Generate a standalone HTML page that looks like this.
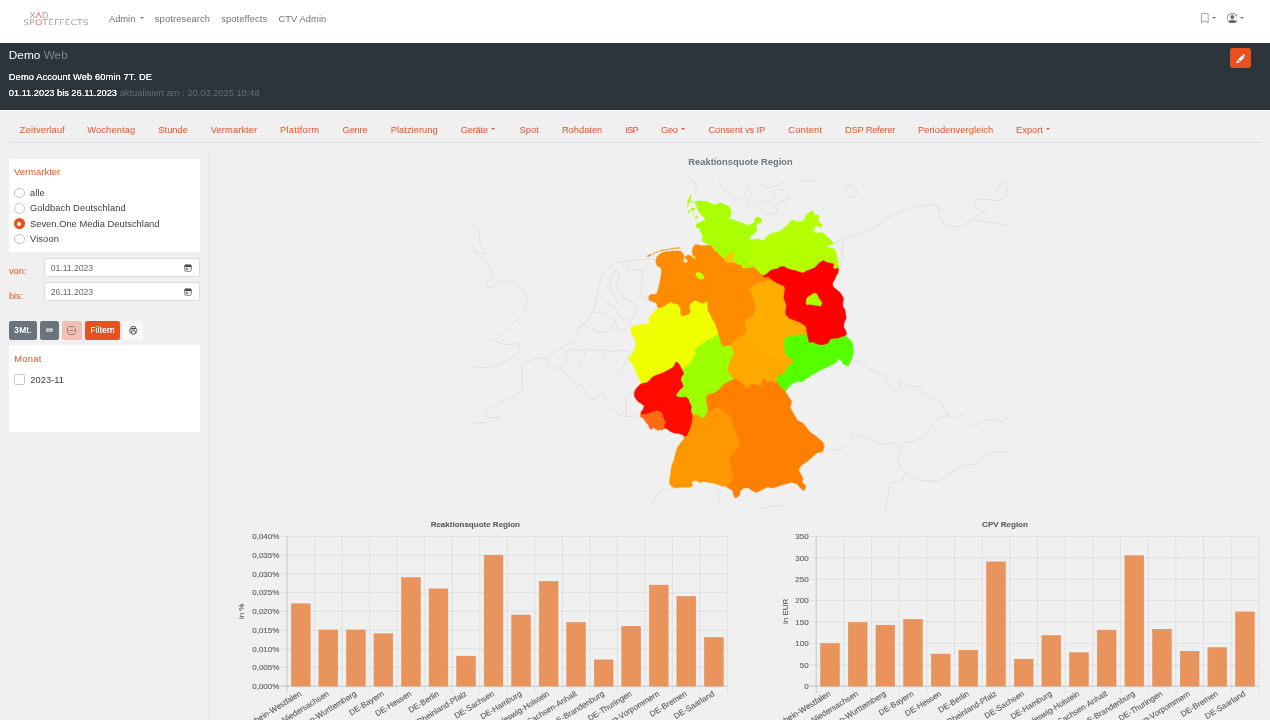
<!DOCTYPE html>
<html lang="de"><head><meta charset="utf-8"><title>Demo Web</title>
<style>
html,body{margin:0;padding:0}
body{width:1270px;height:720px;overflow:hidden;position:relative;background:#f0f0f0;font-family:"Liberation Sans", sans-serif}
#app{position:absolute;left:0;top:0;width:1270px;height:720px;will-change:transform}
.abs,.t,.card,.inp,.caret,.nav,.hdr{position:absolute}
.t{white-space:pre}
.nav{left:0;top:0;width:1270px;height:43px;background:#fff}
.hdr{left:0;top:43.2px;width:1270px;height:66.4px;background:#2d353c;border-bottom:.8px solid #fafafa}
.card{background:#fff}
.inp{background:#fff;border:.7px solid #d9dadc;border-radius:2.2px;box-sizing:border-box}
.caret{width:0;height:0;border-left:2.8px solid transparent;border-right:2.8px solid transparent;border-top:2.9px solid #777}
</style></head>
<body>
<div id="app">
<div class="nav"></div>
<svg class="abs" style="left:18px;top:6px" width="80" height="26" viewBox="18 6 80 26">
<g font-family="'DejaVu Sans', 'Liberation Sans', sans-serif" font-weight="200" fill="#939393" stroke="#939393" stroke-width=".18">
<text x="29.4" y="18.2" font-size="7.4" textLength="19.3" lengthAdjust="spacingAndGlyphs">X<tspan fill="#e8614a" stroke="#e8614a">&#923;</tspan>D</text>
<text x="23.3" y="25.4" font-size="7.4" textLength="65.5" lengthAdjust="spacingAndGlyphs">SP<tspan fill="#e8614a" stroke="#e8614a">O</tspan>TEFFECTS</text>
</g></svg>
<i class="caret" style="left:139.6px;top:17.3px;border-top-color:#737373"></i>
<svg class="abs" style="left:1199.6px;top:13px" width="9.6" height="9.9" viewBox="0 0 16 16" fill="#6b6b6b"><path d="M2 2a2 2 0 0 1 2-2h8a2 2 0 0 1 2 2v13.5a.5.5 0 0 1-.777.416L8 13.101l-5.223 2.815A.5.5 0 0 1 2 15.5zm2-1a1 1 0 0 0-1 1v12.566l4.723-2.482a.5.5 0 0 1 .554 0L13 14.566V2a1 1 0 0 0-1-1z"/></svg>
<i class="caret" style="left:1211.6px;top:17.2px;border-top-color:#737373"></i>
<svg class="abs" style="left:1226.6px;top:12.6px" width="10.67" height="10.67" viewBox="0 0 16 16" fill="#6b6b6b"><path d="M11 6a3 3 0 1 1-6 0 3 3 0 0 1 6 0"/><path fill-rule="evenodd" d="M0 8a8 8 0 1 1 16 0A8 8 0 0 1 0 8m8-7a7 7 0 0 0-5.468 11.37C3.242 11.226 4.805 10 8 10s4.757 1.225 5.468 2.37A7 7 0 0 0 8 1"/></svg>
<i class="caret" style="left:1239.8px;top:17.2px;border-top-color:#737373"></i>
<div class="hdr"></div>
<div class="abs" style="left:1230px;top:48.1px;width:20.8px;height:20.3px;background:#e8501f;border-radius:2.7px"></div>
<svg class="abs" style="left:1235.6px;top:53.6px" width="9.6" height="9.6" viewBox="0 0 16 16" fill="#fff"><path d="M12.854.146a.5.5 0 0 0-.707 0L10.5 1.793 14.207 5.5l1.647-1.646a.5.5 0 0 0 0-.708zm.646 6.061L9.793 2.5 3.293 9H3.5a.5.5 0 0 1 .5.5v.5h.5a.5.5 0 0 1 .5.5v.5h.5a.5.5 0 0 1 .5.5v.5h.5a.5.5 0 0 1 .5.5v.207zm-7.468 7.468A.5.5 0 0 1 6 13.5V13h-.5a.5.5 0 0 1-.5-.5V12h-.5a.5.5 0 0 1-.5-.5V11h-.5a.5.5 0 0 1-.5-.5V10h-.5a.5.5 0 0 1-.175-.032l-.179.178a.5.5 0 0 0-.11.168l-2 5a.5.5 0 0 0 .65.65l5-2a.5.5 0 0 0 .168-.11z"/></svg>
<i class="caret" style="left:491.2px;top:128.4px;border-top-color:#e2542e"></i>
<i class="caret" style="left:680.6px;top:128.4px;border-top-color:#e2542e"></i>
<i class="caret" style="left:1045.7px;top:128.4px;border-top-color:#e2542e"></i>
<div class="abs" style="left:8.7px;top:141.8px;width:1252.6px;height:.7px;background:#dcdfe3"></div>
<div class="abs" style="left:209.3px;top:153px;width:.7px;height:567px;background:#e2e2e2"></div>
<div class="card" style="left:8.7px;top:159px;width:191px;height:93px"></div>
<div class="abs" style="left:13.9px;top:187.75px;width:10.7px;height:10.7px;border-radius:50%;background:#fff;border:.7px solid #c4c8cc;box-sizing:border-box"></div>
<div class="abs" style="left:13.9px;top:203.05px;width:10.7px;height:10.7px;border-radius:50%;background:#fff;border:.7px solid #c4c8cc;box-sizing:border-box"></div>
<div class="abs" style="left:13.9px;top:218.35px;width:10.7px;height:10.7px;border-radius:50%;background:#e8501f;box-sizing:border-box"></div><div class="abs" style="left:17.15px;top:221.60px;width:4.2px;height:4.2px;border-radius:50%;background:#fff"></div>
<div class="abs" style="left:13.9px;top:233.65px;width:10.7px;height:10.7px;border-radius:50%;background:#fff;border:.7px solid #c4c8cc;box-sizing:border-box"></div>
<div class="inp" style="left:43.9px;top:258.1px;width:156.1px;height:18.9px"></div>
<svg class="abs" style="left:184.2px;top:263.55px" width="8" height="8" viewBox="0 0 16 16"><rect x="1.3" y="1.6" width="13.4" height="13" rx="2.4" fill="#fff" stroke="#5a5a5a" stroke-width="1.4"/><path d="M1.3 6.2V4a2.4 2.4 0 0 1 2.4-2.4h8.6A2.4 2.4 0 0 1 14.7 4v2.2z" fill="#4c4c4c"/><rect x="3.4" y="8.4" width="4.6" height="4" fill="#8a8a8a"/><path d="M1.6 8h12.8" stroke="#777" stroke-width=".9"/></svg>
<div class="inp" style="left:43.9px;top:282.4px;width:156.1px;height:18.9px"></div>
<svg class="abs" style="left:184.2px;top:287.85px" width="8" height="8" viewBox="0 0 16 16"><rect x="1.3" y="1.6" width="13.4" height="13" rx="2.4" fill="#fff" stroke="#5a5a5a" stroke-width="1.4"/><path d="M1.3 6.2V4a2.4 2.4 0 0 1 2.4-2.4h8.6A2.4 2.4 0 0 1 14.7 4v2.2z" fill="#4c4c4c"/><rect x="3.4" y="8.4" width="4.6" height="4" fill="#8a8a8a"/><path d="M1.6 8h12.8" stroke="#777" stroke-width=".9"/></svg>
<div class="abs" style="left:8.9px;top:320.8px;width:28.2px;height:18.8px;background:#6b747c;border-radius:2.2px"></div>
<div class="abs" style="left:40.1px;top:320.8px;width:18.5px;height:18.8px;background:#6b747c;border-radius:2.2px"></div>
<div class="abs" style="left:61.7px;top:320.8px;width:20.2px;height:18.8px;background:#f0c0b2;border-radius:2.2px"></div>
<svg class="abs" style="left:67.3px;top:325.7px" width="9" height="9" viewBox="0 0 16 16" fill="#3d3d3d"><path d="M8 15A7 7 0 1 1 8 1a7 7 0 0 1 0 14m0 1A8 8 0 1 0 8 0a8 8 0 0 0 0 16"/><path d="M4 8a.5.5 0 0 1 .5-.5h7a.5.5 0 0 1 0 1h-7A.5.5 0 0 1 4 8"/></svg>
<div class="abs" style="left:85px;top:320.8px;width:35.1px;height:18.8px;background:#e8501f;border-radius:2.2px"></div>
<div class="abs" style="left:123.3px;top:320.8px;width:19.5px;height:18.8px;background:#f8f9fa;border-radius:2.2px"></div>
<svg class="abs" style="left:128.8px;top:326px" width="8.6" height="8.8" viewBox="0 0 16 16" fill="none" stroke="#333" stroke-width="1.5"><rect x="4" y="1" width="8" height="4" rx="1"/><rect x="1.5" y="4.5" width="13" height="8" rx="2.5"/><rect x="4.5" y="8.5" width="7" height="6.5" rx="1" fill="#f8f9fa"/></svg>
<div class="card" style="left:8.7px;top:345px;width:191px;height:87px"></div>
<div class="abs" style="left:14.2px;top:374.3px;width:10.4px;height:10.4px;border-radius:2.2px;background:#fff;border:.7px solid #c4c8cc;box-sizing:border-box"></div>
<svg class="abs" style="left:440px;top:170px" width="620" height="350" viewBox="440 170 620 350">
<g fill="none" stroke="#d9d9d9" stroke-width=".65" stroke-linejoin="round"><polyline points="470.7,222.0 475.4,229.1 480.2,233.8 479.0,240.9 483.7,250.3 486.1,253.9 480.2,252.7 473.1,250.3 475.4,253.9 482.5,258.6 488.4,264.5 492.0,272.8 490.8,278.7 486.1,283.4 487.2,286.9 493.2,286.9 497.9,282.2 505.0,280.6 513.2,282.2 520.3,286.9 525.0,292.8 526.9,301.1 525.0,309.4 521.5,316.5 515.6,321.2 510.9,325.9 506.1,330.6 500.2,335.4 495.5,340.1"/><polyline points="653.8,259.3 645.5,259.3 636.1,260.2 626.6,261.0 617.2,262.6 610.1,265.7 605.4,270.4 601.8,276.3 599.5,284.6 597.8,292.8 595.9,301.1 593.6,309.4 590.0,316.5 585.3,322.4 579.4,328.3 573.5,334.2 568.8,340.1"/><polyline points="616.0,269.2 619.5,277.5 616.0,285.8 621.9,292.8 624.3,298.8 617.2,302.3 613.6,295.2 608.9,288.1 611.3,278.7 616.0,269.2"/><polyline points="626.6,261.0 629.0,269.2 640.8,270.4 647.9,266.9"/><polyline points="640.8,270.4 643.2,281.0 639.6,290.5 645.5,299.9 648.4,299.5"/><polyline points="624.3,298.8 633.7,302.3 636.1,311.7 631.4,321.2 629.0,325.9"/><polyline points="605.4,302.3 614.8,307.0 619.5,316.5 629.0,321.2"/><polyline points="593.6,311.7 605.4,314.1 614.8,321.2 610.1,330.6 600.6,333.0 591.2,328.3 581.7,323.6 577.0,335.4"/><polyline points="614.8,321.2 619.5,330.6 629.0,327.1"/><polyline points="690.9,179.9 695.1,181.8 696.3,187.7 695.1,193.6"/><polyline points="718.8,180.6 722.3,188.9 728.2,193.6 734.1,196.0 738.8,200.7"/><polyline points="834.5,243.2 843.9,238.5 853.4,235.0 865.2,231.4 874.7,227.9 881.7,223.2 888.8,217.2 898.3,212.5 910.1,207.8 921.9,205.4 933.7,204.3 938.4,207.8 939.6,216.1 943.2,223.2 950.3,226.7 959.7,226.7 966.8,223.2 972.7,218.4 978.6,214.9 984.5,211.3 976.2,209.0 973.9,203.1 976.2,199.5 988.1,199.5 999.9,200.7 1005.8,197.2 1007.0,188.9 1009.3,183.0 1002.2,180.6 998.7,187.7 992.8,194.8"/><polyline points="972.7,219.6 985.7,222.0 999.9,223.9 1010.5,225.5"/><polyline points="936.1,205.4 942.0,210.2 946.7,213.7"/><polyline points="834.5,243.2 839.2,248.0 842.8,252.7 841.6,261.0 840.4,266.9"/><polyline points="843.9,238.5 841.6,250.3 843.9,259.8"/><polyline points="845.1,187.7 851.0,184.6 856.9,190.1 855.8,196.0 849.9,197.2 845.1,192.4 845.1,187.7"/><polyline points="740.0,200.7 744.7,196.0 748.3,186.5 750.6,181.8"/><polyline points="745.9,207.8 749.4,198.3 751.8,191.3"/><polyline points="754.2,205.4 761.3,200.7 768.3,203.1 775.4,198.3 773.1,191.3 780.2,188.9 787.2,192.4 790.8,198.3 782.5,200.7 775.4,205.4 777.8,212.5 768.3,213.7 761.3,210.2 754.2,205.4"/><polyline points="758.9,180.6 763.6,186.5 770.7,187.7 780.2,184.2 788.4,180.6"/><polyline points="799.1,179.9 808.5,181.8 818.0,179.4"/><polyline points="853.4,360.1 860.5,362.4 867.6,368.3 877.0,371.9 884.1,375.4 887.6,381.3 891.2,387.2 895.9,392.0 900.6,387.2 898.3,381.3 905.4,383.7 914.8,387.2 919.5,386.1 923.1,393.2 929.0,396.7 936.1,399.1 942.0,402.6 943.2,408.5 946.7,412.1 947.9,415.6 940.8,416.8 936.1,420.3 931.4,426.2 926.6,433.3 919.5,438.0 912.5,441.6 905.4,442.8 901.8,446.3"/><polyline points="947.9,415.6 953.8,419.1 959.7,414.4 964.4,415.6 970.3,422.7 973.9,427.4 978.6,423.9 985.7,420.3 994.0,419.1 1001.0,421.5 1005.8,418.0 1010.5,419.1"/><polyline points="823.9,446.3 829.8,449.9 839.2,449.9 846.3,446.3 851.0,441.6 853.4,434.5 860.5,435.7 867.6,439.2 877.0,442.8 886.5,443.9 893.6,442.8 900.6,446.3 898.8,453.4 897.8,460.5 900.6,467.6 904.9,472.3"/><polyline points="904.9,472.3 912.5,478.2 921.9,480.6 933.7,481.3 943.2,479.4 947.9,473.5 957.3,468.8 966.8,464.0 973.9,465.2 981.0,460.5 988.1,453.4 995.1,451.0 1002.2,452.2 1010.5,451.0"/><polyline points="904.9,472.3 903.0,479.4 895.9,481.7 890.0,482.9 888.8,491.2 887.6,500.6 885.3,510.1"/><polyline points="758.9,508.9 770.7,506.5 782.5,505.4"/><polyline points="493.2,340.0 501.4,343.5 510.9,344.7 518.0,343.5 519.1,349.4 515.6,355.4 508.5,360.1 499.1,363.6 489.6,368.3 480.2,367.2 470.7,366.0"/><polyline points="581.7,340.0 574.7,342.4 567.6,344.7 560.5,348.3 553.4,353.0 546.3,357.7 534.5,358.9 526.2,362.4 522.7,367.2 521.5,375.4 522.7,383.7 521.5,390.8 515.6,395.5 508.5,399.1 500.2,402.6 493.2,406.1 487.2,410.9 484.9,415.6 489.6,418.0 496.7,416.8 501.4,415.6 497.9,419.1 490.8,421.5 482.5,422.7 475.4,423.9 471.9,421.5"/><polyline points="546.3,357.7 548.7,363.6 553.4,368.3 560.5,367.9 565.2,373.1 568.8,379.0 574.7,382.5 581.7,386.1 585.3,390.8 586.5,396.7 592.4,399.1 598.3,396.7 601.8,390.8 604.2,396.7 605.4,402.6 610.1,407.3 616.0,410.9 619.5,415.6 626.6,416.8 633.7,415.6 639.6,416.8"/><polyline points="560.5,348.3 567.6,351.8 572.3,349.4 579.4,350.6 586.5,348.3 593.6,350.6 603.0,349.4 610.1,351.8 619.5,350.6 629.0,351.8"/><polyline points="567.6,351.8 565.2,358.9 568.8,363.6 560.5,367.9"/><polyline points="586.5,348.3 584.1,356.5 579.4,361.3 581.7,366.0"/><polyline points="603.0,349.4 605.4,356.5 600.6,361.3"/><polyline points="626.6,416.8 625.4,408.5 626.6,400.2 630.2,394.3 633.7,390.8 634.9,396.7"/><polyline points="629.0,351.8 626.6,360.1 623.1,366.0 620.7,374.3"/><polyline points="669.2,488.8 662.1,491.2 657.3,493.6 653.8,500.6 650.3,506.5 645.5,510.1"/><polyline points="715.2,487.6 721.1,491.2 717.6,497.1 719.9,503.0 723.5,506.5"/></g>
<polygon points="703.8,390.5 711.2,388.6 717.8,386.7 720.6,383.0 725.3,381.1 730.0,377.4 733.7,373.6 738.4,375.5 743.1,377.4 746.9,379.2 751.5,379.2 758.1,379.2 761.8,377.4 763.7,375.5 766.5,377.4 772.1,377.4 776.8,377.4 779.6,379.2 783.4,385.8 785.3,391.4 788.1,396.1 791.8,401.7 790.0,407.4 793.7,413.9 797.5,420.5 803.1,423.3 806.8,428.0 810.6,432.7 815.2,435.5 818.1,438.3 822.8,442.0 824.1,446.7 822.8,451.4 816.2,453.3 812.4,457.0 806.8,461.7 801.2,465.4 798.4,470.1 801.2,474.8 803.1,479.5 802.1,482.3 805.9,486.1 804.0,490.8 800.3,487.9 797.5,484.2 791.8,482.3 784.3,484.2 778.7,486.1 773.1,487.9 767.5,487.0 761.8,489.8 756.2,492.6 752.5,490.8 748.7,487.9 744.0,487.9 740.3,490.8 739.4,495.4 735.6,498.2 733.7,495.4 732.8,490.8 728.1,487.9 724.4,485.1 722.5,480.4 722.5,465.4 724.4,452.3 728.1,443.0 728.1,431.7 724.4,420.5 716.9,413.0 707.5,414.9 703.8,405.5" fill="#ff8000" stroke="#ff8000" stroke-width=".5" stroke-linejoin="round"/>
<polygon points="655.8,260.0 657.1,256.7 660.0,253.7 664.2,252.1 670.0,251.2 676.7,250.8 680.8,251.2 682.7,252.9 684.2,256.8 683.2,260.0 683.5,261.8 685.0,262.9 687.1,262.5 687.9,260.4 686.7,259.2 685.3,258.7 685.0,256.8 687.1,255.4 689.2,255.0 691.7,256.7 693.3,257.9 694.3,256.8 692.5,254.2 692.1,250.8 693.3,246.7 695.8,244.2 698.3,245.0 701.7,245.8 705.8,245.4 710.0,245.0 712.5,246.2 714.2,249.2 714.6,251.1 720.6,250.0 728.1,253.7 737.5,259.4 748.7,263.1 759.9,270.6 767.4,276.2 773.1,276.6 780.5,284.1 771.2,289.4 759.9,289.4 756.2,310.0 752.4,328.7 748.7,339.9 728.1,345.6 722.5,349.3 716.8,341.8 711.2,336.2 696.2,328.7 668.1,325.0 658.7,309.0 657.8,307.1 655.9,302.5 649.4,300.6 648.4,297.8 650.3,294.6 656.9,294.0 657.1,293.3 658.3,288.3 659.6,284.2 660.4,279.2 661.2,274.2 661.7,270.0 660.8,267.5 657.5,266.3 656.2,263.3" fill="#ff8c00" stroke="#ff8c00" stroke-width=".5" stroke-linejoin="round"/>
<polygon points="708.3,412.9 711.5,410.5 715.5,408.1 719.4,407.4 722.6,409.7 725.0,413.7 729.0,415.3 731.4,419.3 732.2,424.9 734.6,430.5 737.0,436.1 739.4,440.9 739.4,445.7 737.0,448.9 733.8,452.9 729.8,456.0 729.0,460.8 730.6,466.4 732.2,472.0 732.2,477.6 732.2,480.8 728.2,484.8 723.4,486.4 718.6,484.8 713.9,483.2 709.1,482.4 704.3,481.6 699.5,482.4 697.1,480.8 693.1,480.8 691.5,483.2 693.1,485.6 689.9,487.2 685.1,487.2 680.3,487.2 675.5,488.0 671.5,486.4 669.2,482.4 670.0,477.6 670.8,472.0 671.5,466.4 674.0,460.0 675.5,453.6 677.1,448.1 680.3,443.3 684.3,438.5 681.9,432.9 686.7,416.9 694.7,408.9 704.3,408.9" fill="#ff9800" stroke="#ff9800" stroke-width=".5" stroke-linejoin="round"/>
<polygon points="656.7,309.1 661.5,307.8 666.3,305.4 670.3,302.2 673.5,303.8 677.5,304.6 680.3,308.6 679.9,312.6 681.5,316.6 685.5,315.8 689.4,314.2 691.0,311.0 689.4,307.0 691.0,303.8 695.0,300.6 698.2,302.2 703.0,303.8 707.5,301.4 707.0,306.2 707.8,311.0 710.2,315.0 711.8,318.9 714.2,322.1 715.8,326.9 717.4,330.9 718.2,334.9 715.8,342.9 709.4,355.7 696.6,371.6 683.9,384.4 659.9,390.8 644.0,387.6 640.8,383.6 640.0,380.4 637.6,376.4 636.0,371.6 633.6,367.6 632.0,363.6 628.8,359.7 629.6,356.5 633.6,351.7 635.2,347.7 636.0,342.9 634.4,338.1 632.0,334.1 630.4,329.3 632.8,326.1 637.6,325.3 644.0,324.5 649.5,322.9 648.7,318.9 651.1,315.0 654.3,311.8" fill="#f0ff00" stroke="#f0ff00" stroke-width=".5" stroke-linejoin="round"/>
<polygon points="683.9,368.7 686.0,366.6 689.7,364.4 691.9,361.4 693.3,357.8 695.5,354.1 694.8,350.5 697.0,346.9 700.6,345.4 704.3,343.2 707.2,340.3 711.5,338.9 715.2,335.9 717.4,334.5 719.6,338.1 720.3,342.5 721.8,345.4 724.7,346.9 727.6,345.4 734.1,346.9 737.1,361.4 734.1,378.9 729.8,380.4 726.1,382.6 722.5,384.8 720.3,387.7 717.4,390.6 713.7,392.8 710.1,393.5 706.4,395.0 705.7,399.3 706.4,403.7 707.6,407.4 707.2,411.7 705.0,415.4 702.8,418.3 699.9,416.1 697.0,413.9 694.0,414.6 691.9,412.5 686.0,412.5 684.6,400.8 672.9,397.9 674.4,383.3 678.8,371.6" fill="#9dff00" stroke="#9dff00" stroke-width=".5" stroke-linejoin="round"/>
<polygon points="640.1,384.5 643.0,383.3 646.6,382.7 649.5,380.4 651.9,377.4 655.4,375.6 659.6,373.9 663.1,372.7 666.6,370.9 670.2,369.1 673.7,366.8 675.9,362.1 677.9,362.6 680.2,366.2 682.6,370.9 683.8,373.9 681.4,376.8 680.8,380.4 682.6,383.9 683.2,386.9 680.2,389.2 677.9,392.2 676.1,394.5 677.3,396.9 681.4,397.5 686.1,396.9 688.5,399.2 689.7,402.8 691.5,406.3 690.9,409.9 691.5,413.4 692.3,415.6 692.0,419.3 691.5,422.9 690.3,426.4 689.1,430.6 687.3,434.7 685.5,436.4 682.6,434.7 679.0,433.5 675.5,433.3 672.0,432.3 669.0,430.6 667.2,428.8 664.9,428.2 659.0,426.4 649.5,424.1 642.4,415.8 640.7,414.4 641.3,411.6 643.6,408.7 644.2,405.8 641.9,404.0 638.9,402.2 636.5,399.8 634.8,396.9 634.2,393.4 635.4,389.8 637.1,387.4" fill="#ff0a00" stroke="#ff0a00" stroke-width=".5" stroke-linejoin="round"/>
<polygon points="640.7,414.4 643.6,414.6 647.2,414.0 650.1,412.8 653.1,411.6 656.6,410.8 660.2,411.6 662.5,414.0 663.1,417.0 664.3,419.9 665.5,422.9 663.9,425.8 664.6,428.5 661.9,430.0 659.6,429.4 657.8,430.6 655.4,428.8 653.1,427.6 651.3,429.4 649.5,428.2 648.4,425.2 646.6,422.9 644.8,420.5 643.0,418.1 640.7,417.0 640.1,415.6" fill="#ff6a14" stroke="#ff6a14" stroke-width=".5" stroke-linejoin="round"/>
<polygon points="727.1,345.4 731.8,344.2 736.5,338.9 740.1,336.5 745.4,334.7 750.7,332.4 759.0,339.4 767.2,346.5 776.7,353.6 786.1,355.4 795.6,358.4 795.6,365.4 788.5,377.2 781.4,383.1 777.9,382.0 774.3,382.0 770.8,380.8 767.2,382.0 765.5,379.0 763.1,378.4 761.3,382.0 760.8,385.5 758.4,384.9 754.8,383.7 750.7,384.3 748.4,386.1 747.8,388.5 745.4,387.9 744.2,384.9 741.3,382.0 738.3,380.2 734.8,377.2 733.0,377.8 731.2,377.2 731.2,376.6 729.5,373.1 727.7,370.2 728.9,365.4 730.0,361.3 732.4,357.2 734.2,353.0 731.2,346.5" fill="#ffa900" stroke="#ffa900" stroke-width=".5" stroke-linejoin="round"/>
<polygon points="767.1,280.6 764.2,282.1 757.4,284.0 751.8,286.8 749.5,289.4 751.8,294.8 754.1,300.1 754.9,305.5 755.6,310.8 753.3,316.1 748.0,319.2 744.9,322.2 745.7,327.6 746.5,332.2 744.9,336.0 749.5,336.4 752.6,339.8 754.9,342.9 759.4,344.4 762.5,348.2 763.2,352.0 767.1,354.3 771.6,355.8 775.5,358.1 780.0,358.9 788.4,357.4 793.0,356.6 790.0,341.3 808.3,336.8 811.3,330.6 802.2,318.4 791.5,310.8 788.4,287.9 780.8,282.6 775.0,281.5" fill="#ffad00" stroke="#ffad00" stroke-width=".5" stroke-linejoin="round"/>
<polygon points="806.9,334.2 803.4,334.8 798.6,334.8 793.9,335.9 789.2,336.5 785.0,338.3 784.5,341.9 784.5,346.0 785.0,350.7 785.6,354.2 786.8,356.0 790.4,357.8 793.3,360.2 793.9,361.9 790.9,364.3 788.0,366.6 786.2,369.0 785.6,372.6 782.1,374.3 778.5,376.1 776.8,377.9 777.4,381.4 779.1,385.0 781.5,387.3 783.9,389.1 786.2,390.9 788.0,387.9 790.4,385.6 792.7,383.2 796.3,382.0 799.8,381.4 803.4,381.4 805.1,379.1 808.7,377.3 811.6,374.9 815.8,373.1 818.7,370.8 822.8,369.0 827.0,367.2 830.5,365.5 834.0,363.7 837.0,361.9 837.6,359.6 835.2,358.4 838.8,359.0 841.7,360.8 842.9,363.7 845.9,365.5 848.2,366.1 850.0,362.5 851.8,359.0 853.0,354.8 853.5,350.7 852.7,346.6 852.4,343.0 850.6,340.1 847.6,337.7 846.8,337.5 845.9,334.2 828.1,336.5 819.9,340.1 810.4,337.7" fill="#55ff00" stroke="#55ff00" stroke-width=".5" stroke-linejoin="round"/>
<polygon points="750.0,240.0 753.8,239.4 758.1,238.8 761.9,240.6 764.4,240.0 765.6,237.5 768.8,235.0 771.9,233.1 775.6,232.8 779.4,231.2 782.5,229.4 785.0,226.9 788.1,224.4 791.2,220.0 794.4,220.6 798.1,221.9 801.2,221.2 804.4,220.0 805.6,215.6 808.8,213.1 811.9,210.6 813.8,211.9 814.0,215.0 817.5,215.0 819.4,216.2 818.1,220.0 819.4,222.5 821.9,224.4 822.2,226.9 820.0,227.5 817.5,225.6 815.0,226.9 813.1,229.4 814.4,232.5 818.1,233.1 821.9,232.2 825.0,234.4 828.1,237.5 831.2,240.6 833.5,243.8 830.0,244.8 826.9,245.6 827.5,247.5 831.2,248.1 835.0,249.4 836.2,252.5 836.9,256.2 837.5,260.0 838.1,263.8 838.8,267.5 837.5,275.0 800.0,280.0 775.0,280.0 768.8,277.2 762.5,275.0 760.0,272.5 756.9,269.4 754.4,266.9 751.9,266.2 750.0,267.5 742.5,268.1 742.5,241.2" fill="#b4ff00" stroke="#b4ff00" stroke-width=".5" stroke-linejoin="round"/>
<polygon points="767.8,272.9 769.9,270.8 773.3,269.4 777.5,268.8 780.3,266.7 784.4,266.7 787.9,268.8 792.1,270.1 796.2,270.8 799.7,272.2 803.2,272.9 806.7,270.8 810.8,269.4 814.3,268.1 817.1,265.3 819.9,262.5 823.3,260.4 826.8,262.5 831.0,263.2 833.8,263.9 833.1,267.4 834.4,269.4 837.2,268.1 838.6,268.8 837.9,272.9 835.8,276.4 834.4,279.9 832.4,283.3 833.1,286.8 836.5,289.6 840.0,292.4 842.1,295.8 843.5,298.6 842.8,302.8 842.8,306.2 844.9,309.7 845.6,313.9 846.2,318.1 844.2,322.2 843.5,327.1 845.6,330.6 846.7,334.0 844.9,335.8 841.4,336.8 837.2,338.2 833.1,338.2 829.6,339.6 828.2,343.1 824.0,344.4 819.9,344.7 815.7,343.3 812.2,341.7 809.4,342.8 808.3,338.9 807.4,334.7 806.7,330.6 806.0,326.4 803.2,324.3 799.7,322.2 796.2,320.8 792.1,319.4 788.6,317.4 785.8,314.6 785.8,310.4 786.5,305.6 785.1,301.4 783.8,297.9 784.4,293.8 785.1,289.6 784.4,286.1 781.0,284.7 777.5,283.3 774.0,281.2 770.6,278.5 767.8,276.4 765.6,277.4 762.5,276.0 765.0,275.1" fill="#ff0000" stroke="#ff0000" stroke-width=".5" stroke-linejoin="round"/>
<polygon points="806.0,303.5 806.7,298.6 808.8,296.5 811.5,295.1 814.3,293.1 817.1,294.4 818.5,297.9 820.6,300.7 821.9,303.5 820.6,306.2 817.8,305.6 813.6,304.9 809.4,304.2 807.4,304.9" fill="#aaff00" stroke="#aaff00" stroke-width=".5" stroke-linejoin="round"/>
<polygon points="695.0,201.8 700.0,200.8 707.0,201.5 712.0,204.0 714.5,205.0 720.0,202.8 724.0,204.5 728.5,206.0 730.5,209.5 731.2,214.0 729.0,218.5 732.0,219.5 736.0,221.0 742.0,223.0 748.0,225.5 752.0,223.5 755.0,222.2 754.5,219.0 757.5,216.8 761.0,218.5 762.0,222.0 758.5,223.0 756.5,225.0 757.0,230.0 754.0,234.0 750.0,236.0 749.5,238.5 750.7,239.4 752.2,242.4 749.8,245.3 748.8,248.2 750.7,251.1 752.2,254.0 751.2,257.4 748.8,259.8 746.4,262.3 744.9,264.2 741.5,265.2 738.6,264.2 735.7,262.8 732.8,262.3 729.8,261.8 728.4,262.8 726.4,261.8 725.0,260.3 724.0,258.4 721.6,256.4 719.2,254.0 716.7,251.6 714.3,249.2 712.8,246.7 710.9,245.1 707.5,243.8 704.6,242.8 702.6,240.9 701.7,238.5 703.1,236.5 701.7,234.1 700.2,231.7 700.7,229.2 698.3,228.3 695.8,226.8 696.3,223.9 699.2,222.4 702.0,221.5 705.5,220.0 705.0,218.5 702.0,215.5 700.0,213.0 697.5,209.0 696.5,205.0 695.0,202.2" fill="#aaff00" stroke="#aaff00" stroke-width=".5" stroke-linejoin="round"/>
<polygon points="724.0,257.9 726.4,256.0 729.8,253.5 732.8,252.1 733.7,254.0 733.2,256.9 731.8,258.9 733.2,260.3 735.7,262.3 735.2,263.2 732.8,262.3 729.8,261.8 728.4,262.8 726.4,261.8 725.0,260.3" fill="#ffc400" stroke="#ffc400" stroke-width=".5" stroke-linejoin="round"/>
<polygon points="695.8,273.0 699.2,272.5 702.1,273.9 704.1,275.9 703.6,278.8 700.7,279.3 698.3,278.3 696.3,275.9" fill="#ccff00" stroke="#ccff00" stroke-width=".5" stroke-linejoin="round"/>

<g fill="#aaff00">
<polygon points="691,194.2 689.2,197 687.4,202.5 687.2,207.5 688.2,207 688.8,203.5 690,200.8 692.5,202.6 695,202.5 695,201.8 692.5,201.6 690.5,199.5 691.2,196.5 691.6,194.5"/>
<ellipse cx="692.5" cy="209.3" rx="2.6" ry="1.4" transform="rotate(-10 692.5 209.3)"/>
<ellipse cx="688.8" cy="211.7" rx=".8" ry="1.8" transform="rotate(-15 688.8 211.7)"/>
<ellipse cx="696.5" cy="217.2" rx="1.5" ry="1.2"/>
<ellipse cx="693.7" cy="214.6" rx="1" ry=".5"/>
</g>
<g stroke="#f08c14" stroke-width="1" stroke-linecap="round" fill="none">
<path d="M647.7,256.2 L651,254.7" stroke-width="1.5"/><path d="M652.9,253.8 L655,252.7"/><path d="M656.2,252.3 L657.9,251.7"/><path d="M660,250.8 L663.8,250"/><path d="M665,250 L668.3,249.3"/><path d="M669.6,249.2 L673.8,248.3"/><path d="M675,248.2 L680,247.9"/>
</g>
<polygon points="693.3,255.9 695.3,256.5 695.4,259.2 693.6,258.6" fill="#d4ff00"/>

</svg>
<svg class="abs" style="left:220px;top:515px" width="1050" height="205" viewBox="220 515 1050 205" font-family='"Liberation Sans", sans-serif' font-size="8" fill="#5e5e5e" stroke="#5e5e5e" stroke-width=".12">
<line x1="280.30" x2="727.60" y1="686.10" y2="686.10" stroke="#9aa8b3" stroke-width=".55"/>
<text x="279.40" y="688.95" text-anchor="end">0,000%</text>
<line x1="280.30" x2="727.60" y1="667.40" y2="667.40" stroke="#d3d5d7" stroke-width=".55"/>
<text x="279.40" y="670.25" text-anchor="end">0,005%</text>
<line x1="280.30" x2="727.60" y1="648.70" y2="648.70" stroke="#d3d5d7" stroke-width=".55"/>
<text x="279.40" y="651.55" text-anchor="end">0,010%</text>
<line x1="280.30" x2="727.60" y1="630.00" y2="630.00" stroke="#d3d5d7" stroke-width=".55"/>
<text x="279.40" y="632.85" text-anchor="end">0,015%</text>
<line x1="280.30" x2="727.60" y1="611.30" y2="611.30" stroke="#d3d5d7" stroke-width=".55"/>
<text x="279.40" y="614.15" text-anchor="end">0,020%</text>
<line x1="280.30" x2="727.60" y1="592.60" y2="592.60" stroke="#d3d5d7" stroke-width=".55"/>
<text x="279.40" y="595.45" text-anchor="end">0,025%</text>
<line x1="280.30" x2="727.60" y1="573.90" y2="573.90" stroke="#d3d5d7" stroke-width=".55"/>
<text x="279.40" y="576.75" text-anchor="end">0,030%</text>
<line x1="280.30" x2="727.60" y1="555.20" y2="555.20" stroke="#d3d5d7" stroke-width=".55"/>
<text x="279.40" y="558.05" text-anchor="end">0,035%</text>
<line x1="280.30" x2="727.60" y1="536.50" y2="536.50" stroke="#d3d5d7" stroke-width=".55"/>
<text x="279.40" y="539.35" text-anchor="end">0,040%</text>
<line x1="287.00" x2="287.00" y1="536.50" y2="693.00" stroke="#9aa8b3" stroke-width=".55"/>
<line x1="314.54" x2="314.54" y1="536.50" y2="693.00" stroke="#d3d5d7" stroke-width=".55"/>
<line x1="342.07" x2="342.07" y1="536.50" y2="693.00" stroke="#d3d5d7" stroke-width=".55"/>
<line x1="369.61" x2="369.61" y1="536.50" y2="693.00" stroke="#d3d5d7" stroke-width=".55"/>
<line x1="397.15" x2="397.15" y1="536.50" y2="693.00" stroke="#d3d5d7" stroke-width=".55"/>
<line x1="424.69" x2="424.69" y1="536.50" y2="693.00" stroke="#d3d5d7" stroke-width=".55"/>
<line x1="452.23" x2="452.23" y1="536.50" y2="693.00" stroke="#d3d5d7" stroke-width=".55"/>
<line x1="479.76" x2="479.76" y1="536.50" y2="693.00" stroke="#d3d5d7" stroke-width=".55"/>
<line x1="507.30" x2="507.30" y1="536.50" y2="693.00" stroke="#d3d5d7" stroke-width=".55"/>
<line x1="534.84" x2="534.84" y1="536.50" y2="693.00" stroke="#d3d5d7" stroke-width=".55"/>
<line x1="562.38" x2="562.38" y1="536.50" y2="693.00" stroke="#d3d5d7" stroke-width=".55"/>
<line x1="589.91" x2="589.91" y1="536.50" y2="693.00" stroke="#d3d5d7" stroke-width=".55"/>
<line x1="617.45" x2="617.45" y1="536.50" y2="693.00" stroke="#d3d5d7" stroke-width=".55"/>
<line x1="644.99" x2="644.99" y1="536.50" y2="693.00" stroke="#d3d5d7" stroke-width=".55"/>
<line x1="672.53" x2="672.53" y1="536.50" y2="693.00" stroke="#d3d5d7" stroke-width=".55"/>
<line x1="700.06" x2="700.06" y1="536.50" y2="693.00" stroke="#d3d5d7" stroke-width=".55"/>
<line x1="727.60" x2="727.60" y1="536.50" y2="693.00" stroke="#d3d5d7" stroke-width=".55"/>
<rect x="291.37" y="603.82" width="18.80" height="82.28" fill="#e9945d" stroke="#e38a52" stroke-width=".5"/>
<text transform="translate(300.47,692.80) rotate(-31.5)" text-anchor="end" y="2.8">DE-Nordrhein-Westfalen</text>
<rect x="318.91" y="630.00" width="18.80" height="56.10" fill="#e9945d" stroke="#e38a52" stroke-width=".5"/>
<text transform="translate(328.01,692.80) rotate(-31.5)" text-anchor="end" y="2.8">DE-Niedersachsen</text>
<rect x="346.44" y="630.00" width="18.80" height="56.10" fill="#e9945d" stroke="#e38a52" stroke-width=".5"/>
<text transform="translate(355.54,692.80) rotate(-31.5)" text-anchor="end" y="2.8">DE-Baden-Wurttemberg</text>
<rect x="373.98" y="633.74" width="18.80" height="52.36" fill="#e9945d" stroke="#e38a52" stroke-width=".5"/>
<text transform="translate(383.08,692.80) rotate(-31.5)" text-anchor="end" y="2.8">DE-Bayern</text>
<rect x="401.52" y="577.64" width="18.80" height="108.46" fill="#e9945d" stroke="#e38a52" stroke-width=".5"/>
<text transform="translate(410.62,692.80) rotate(-31.5)" text-anchor="end" y="2.8">DE-Hessen</text>
<rect x="429.06" y="588.86" width="18.80" height="97.24" fill="#e9945d" stroke="#e38a52" stroke-width=".5"/>
<text transform="translate(438.16,692.80) rotate(-31.5)" text-anchor="end" y="2.8">DE-Berlin</text>
<rect x="456.59" y="656.18" width="18.80" height="29.92" fill="#e9945d" stroke="#e38a52" stroke-width=".5"/>
<text transform="translate(465.69,692.80) rotate(-31.5)" text-anchor="end" y="2.8">DE-Rheinland-Pfalz</text>
<rect x="484.13" y="555.20" width="18.80" height="130.90" fill="#e9945d" stroke="#e38a52" stroke-width=".5"/>
<text transform="translate(493.23,692.80) rotate(-31.5)" text-anchor="end" y="2.8">DE-Sachsen</text>
<rect x="511.67" y="615.04" width="18.80" height="71.06" fill="#e9945d" stroke="#e38a52" stroke-width=".5"/>
<text transform="translate(520.77,692.80) rotate(-31.5)" text-anchor="end" y="2.8">DE-Hamburg</text>
<rect x="539.21" y="581.38" width="18.80" height="104.72" fill="#e9945d" stroke="#e38a52" stroke-width=".5"/>
<text transform="translate(548.31,692.80) rotate(-31.5)" text-anchor="end" y="2.8">DE-Schleswig-Holstein</text>
<rect x="566.74" y="622.52" width="18.80" height="63.58" fill="#e9945d" stroke="#e38a52" stroke-width=".5"/>
<text transform="translate(575.84,692.80) rotate(-31.5)" text-anchor="end" y="2.8">DE-Sachsen-Anhalt</text>
<rect x="594.28" y="659.92" width="18.80" height="26.18" fill="#e9945d" stroke="#e38a52" stroke-width=".5"/>
<text transform="translate(603.38,692.80) rotate(-31.5)" text-anchor="end" y="2.8">DE-Brandenburg</text>
<rect x="621.82" y="626.26" width="18.80" height="59.84" fill="#e9945d" stroke="#e38a52" stroke-width=".5"/>
<text transform="translate(630.92,692.80) rotate(-31.5)" text-anchor="end" y="2.8">DE-Thuringen</text>
<rect x="649.36" y="585.12" width="18.80" height="100.98" fill="#e9945d" stroke="#e38a52" stroke-width=".5"/>
<text transform="translate(658.46,692.80) rotate(-31.5)" text-anchor="end" y="2.8">DE-Mecklenburg-Vorpommern</text>
<rect x="676.89" y="596.34" width="18.80" height="89.76" fill="#e9945d" stroke="#e38a52" stroke-width=".5"/>
<text transform="translate(685.99,692.80) rotate(-31.5)" text-anchor="end" y="2.8">DE-Bremen</text>
<rect x="704.43" y="637.48" width="18.80" height="48.62" fill="#e9945d" stroke="#e38a52" stroke-width=".5"/>
<text transform="translate(713.53,692.80) rotate(-31.5)" text-anchor="end" y="2.8">DE-Saarland</text>
<text transform="translate(241.3,611.30) rotate(-90)" text-anchor="middle" y="2.8">in %</text>
<text x="475.3" y="527.4" text-anchor="middle" font-weight="bold">Reaktionsquote Region</text>
<line x1="809.50" x2="1258.80" y1="686.10" y2="686.10" stroke="#9aa8b3" stroke-width=".55"/>
<text x="808.60" y="688.95" text-anchor="end">0</text>
<line x1="809.50" x2="1258.80" y1="664.73" y2="664.73" stroke="#d3d5d7" stroke-width=".55"/>
<text x="808.60" y="667.58" text-anchor="end">50</text>
<line x1="809.50" x2="1258.80" y1="643.36" y2="643.36" stroke="#d3d5d7" stroke-width=".55"/>
<text x="808.60" y="646.21" text-anchor="end">100</text>
<line x1="809.50" x2="1258.80" y1="621.99" y2="621.99" stroke="#d3d5d7" stroke-width=".55"/>
<text x="808.60" y="624.84" text-anchor="end">150</text>
<line x1="809.50" x2="1258.80" y1="600.61" y2="600.61" stroke="#d3d5d7" stroke-width=".55"/>
<text x="808.60" y="603.46" text-anchor="end">200</text>
<line x1="809.50" x2="1258.80" y1="579.24" y2="579.24" stroke="#d3d5d7" stroke-width=".55"/>
<text x="808.60" y="582.09" text-anchor="end">250</text>
<line x1="809.50" x2="1258.80" y1="557.87" y2="557.87" stroke="#d3d5d7" stroke-width=".55"/>
<text x="808.60" y="560.72" text-anchor="end">300</text>
<line x1="809.50" x2="1258.80" y1="536.50" y2="536.50" stroke="#d3d5d7" stroke-width=".55"/>
<text x="808.60" y="539.35" text-anchor="end">350</text>
<line x1="816.20" x2="816.20" y1="536.50" y2="693.00" stroke="#9aa8b3" stroke-width=".55"/>
<line x1="843.86" x2="843.86" y1="536.50" y2="693.00" stroke="#d3d5d7" stroke-width=".55"/>
<line x1="871.53" x2="871.53" y1="536.50" y2="693.00" stroke="#d3d5d7" stroke-width=".55"/>
<line x1="899.19" x2="899.19" y1="536.50" y2="693.00" stroke="#d3d5d7" stroke-width=".55"/>
<line x1="926.85" x2="926.85" y1="536.50" y2="693.00" stroke="#d3d5d7" stroke-width=".55"/>
<line x1="954.51" x2="954.51" y1="536.50" y2="693.00" stroke="#d3d5d7" stroke-width=".55"/>
<line x1="982.17" x2="982.17" y1="536.50" y2="693.00" stroke="#d3d5d7" stroke-width=".55"/>
<line x1="1009.84" x2="1009.84" y1="536.50" y2="693.00" stroke="#d3d5d7" stroke-width=".55"/>
<line x1="1037.50" x2="1037.50" y1="536.50" y2="693.00" stroke="#d3d5d7" stroke-width=".55"/>
<line x1="1065.16" x2="1065.16" y1="536.50" y2="693.00" stroke="#d3d5d7" stroke-width=".55"/>
<line x1="1092.83" x2="1092.83" y1="536.50" y2="693.00" stroke="#d3d5d7" stroke-width=".55"/>
<line x1="1120.49" x2="1120.49" y1="536.50" y2="693.00" stroke="#d3d5d7" stroke-width=".55"/>
<line x1="1148.15" x2="1148.15" y1="536.50" y2="693.00" stroke="#d3d5d7" stroke-width=".55"/>
<line x1="1175.81" x2="1175.81" y1="536.50" y2="693.00" stroke="#d3d5d7" stroke-width=".55"/>
<line x1="1203.47" x2="1203.47" y1="536.50" y2="693.00" stroke="#d3d5d7" stroke-width=".55"/>
<line x1="1231.14" x2="1231.14" y1="536.50" y2="693.00" stroke="#d3d5d7" stroke-width=".55"/>
<line x1="1258.80" x2="1258.80" y1="536.50" y2="693.00" stroke="#d3d5d7" stroke-width=".55"/>
<rect x="820.63" y="643.57" width="18.80" height="42.53" fill="#e9945d" stroke="#e38a52" stroke-width=".5"/>
<text transform="translate(829.73,692.80) rotate(-31.5)" text-anchor="end" y="2.8">DE-Nordrhein-Westfalen</text>
<rect x="848.29" y="622.41" width="18.80" height="63.69" fill="#e9945d" stroke="#e38a52" stroke-width=".5"/>
<text transform="translate(857.39,692.80) rotate(-31.5)" text-anchor="end" y="2.8">DE-Niedersachsen</text>
<rect x="875.96" y="625.19" width="18.80" height="60.91" fill="#e9945d" stroke="#e38a52" stroke-width=".5"/>
<text transform="translate(885.06,692.80) rotate(-31.5)" text-anchor="end" y="2.8">DE-Baden-Wurttemberg</text>
<rect x="903.62" y="619.42" width="18.80" height="66.68" fill="#e9945d" stroke="#e38a52" stroke-width=".5"/>
<text transform="translate(912.72,692.80) rotate(-31.5)" text-anchor="end" y="2.8">DE-Bayern</text>
<rect x="931.28" y="654.04" width="18.80" height="32.06" fill="#e9945d" stroke="#e38a52" stroke-width=".5"/>
<text transform="translate(940.38,692.80) rotate(-31.5)" text-anchor="end" y="2.8">DE-Hessen</text>
<rect x="958.94" y="650.20" width="18.80" height="35.90" fill="#e9945d" stroke="#e38a52" stroke-width=".5"/>
<text transform="translate(968.04,692.80) rotate(-31.5)" text-anchor="end" y="2.8">DE-Berlin</text>
<rect x="986.61" y="561.93" width="18.80" height="124.17" fill="#e9945d" stroke="#e38a52" stroke-width=".5"/>
<text transform="translate(995.71,692.80) rotate(-31.5)" text-anchor="end" y="2.8">DE-Rheinland-Pfalz</text>
<rect x="1014.27" y="659.17" width="18.80" height="26.93" fill="#e9945d" stroke="#e38a52" stroke-width=".5"/>
<text transform="translate(1023.37,692.80) rotate(-31.5)" text-anchor="end" y="2.8">DE-Sachsen</text>
<rect x="1041.93" y="635.66" width="18.80" height="50.44" fill="#e9945d" stroke="#e38a52" stroke-width=".5"/>
<text transform="translate(1051.03,692.80) rotate(-31.5)" text-anchor="end" y="2.8">DE-Hamburg</text>
<rect x="1069.59" y="652.76" width="18.80" height="33.34" fill="#e9945d" stroke="#e38a52" stroke-width=".5"/>
<text transform="translate(1078.69,692.80) rotate(-31.5)" text-anchor="end" y="2.8">DE-Schleswig-Holstein</text>
<rect x="1097.26" y="630.11" width="18.80" height="55.99" fill="#e9945d" stroke="#e38a52" stroke-width=".5"/>
<text transform="translate(1106.36,692.80) rotate(-31.5)" text-anchor="end" y="2.8">DE-Sachsen-Anhalt</text>
<rect x="1124.92" y="555.73" width="18.80" height="130.37" fill="#e9945d" stroke="#e38a52" stroke-width=".5"/>
<text transform="translate(1134.02,692.80) rotate(-31.5)" text-anchor="end" y="2.8">DE-Brandenburg</text>
<rect x="1152.58" y="629.25" width="18.80" height="56.85" fill="#e9945d" stroke="#e38a52" stroke-width=".5"/>
<text transform="translate(1161.68,692.80) rotate(-31.5)" text-anchor="end" y="2.8">DE-Thuringen</text>
<rect x="1180.24" y="651.26" width="18.80" height="34.84" fill="#e9945d" stroke="#e38a52" stroke-width=".5"/>
<text transform="translate(1189.34,692.80) rotate(-31.5)" text-anchor="end" y="2.8">DE-Mecklenburg-Vorpommern</text>
<rect x="1207.91" y="647.63" width="18.80" height="38.47" fill="#e9945d" stroke="#e38a52" stroke-width=".5"/>
<text transform="translate(1217.01,692.80) rotate(-31.5)" text-anchor="end" y="2.8">DE-Bremen</text>
<rect x="1235.57" y="611.94" width="18.80" height="74.16" fill="#e9945d" stroke="#e38a52" stroke-width=".5"/>
<text transform="translate(1244.67,692.80) rotate(-31.5)" text-anchor="end" y="2.8">DE-Saarland</text>
<text transform="translate(785.3,611.30) rotate(-90)" text-anchor="middle" y="2.8">in EUR</text>
<text x="1005" y="527.4" text-anchor="middle" font-weight="bold">CPV Region</text>
</svg>
<span class="t" style="left:109.00px;top:12.70px;font-size:9.33px;line-height:12.13px;color:#737373;letter-spacing:-0.031px;">Admin</span>
<span class="t" style="left:154.80px;top:12.70px;font-size:9.33px;line-height:12.13px;color:#737373;letter-spacing:0.122px;">spotresearch</span>
<span class="t" style="left:221.20px;top:12.70px;font-size:9.33px;line-height:12.13px;color:#737373;letter-spacing:0.095px;">spoteffects</span>
<span class="t" style="left:278.40px;top:12.70px;font-size:9.33px;line-height:12.13px;color:#737373;letter-spacing:0.090px;">CTV Admin</span>
<span class="t" style="left:8.80px;top:48.34px;font-size:11.8px;line-height:15.34px;color:#fff;letter-spacing:0.025px;">Demo <span style="color:#7d868d">Web</span></span>
<span class="t" style="left:8.80px;top:70.90px;font-size:9.33px;line-height:12.13px;color:#fff;letter-spacing:0.081px;text-shadow:0 0 .25px #fff;">Demo Account Web 60min 7T. DE</span>
<span class="t" style="left:8.80px;top:86.80px;font-size:9.33px;line-height:12.13px;color:#fff;letter-spacing:-0.036px;text-shadow:0 0 .25px #fff;">01.11.2023 bis 26.11.2023</span>
<span class="t" style="left:119.70px;top:86.80px;font-size:9.33px;line-height:12.13px;color:#646e76;letter-spacing:-0.016px;">aktualisiert am : 20.03.2025 10:48</span>
<span class="t" style="left:19.80px;top:123.50px;font-size:9.33px;line-height:12.13px;color:#e2542e;letter-spacing:0.149px;">Zeitverlauf</span>
<span class="t" style="left:87.30px;top:123.50px;font-size:9.33px;line-height:12.13px;color:#e2542e;letter-spacing:0.108px;">Wochentag</span>
<span class="t" style="left:158.30px;top:123.50px;font-size:9.33px;line-height:12.13px;color:#e2542e;letter-spacing:0.020px;">Stunde</span>
<span class="t" style="left:210.80px;top:123.50px;font-size:9.33px;line-height:12.13px;color:#e2542e;letter-spacing:0.077px;">Vermarkter</span>
<span class="t" style="left:280.00px;top:123.50px;font-size:9.33px;line-height:12.13px;color:#e2542e;letter-spacing:0.219px;">Plattform</span>
<span class="t" style="left:342.60px;top:123.50px;font-size:9.33px;line-height:12.13px;color:#e2542e;letter-spacing:-0.208px;">Genre</span>
<span class="t" style="left:390.80px;top:123.50px;font-size:9.33px;line-height:12.13px;color:#e2542e;letter-spacing:0.012px;">Platzierung</span>
<span class="t" style="left:460.70px;top:123.50px;font-size:9.33px;line-height:12.13px;color:#e2542e;letter-spacing:-0.205px;">Ger&auml;te</span>
<span class="t" style="left:519.60px;top:123.50px;font-size:9.33px;line-height:12.13px;color:#e2542e;letter-spacing:-0.001px;">Spot</span>
<span class="t" style="left:561.90px;top:123.50px;font-size:9.33px;line-height:12.13px;color:#e2542e;letter-spacing:-0.009px;">Rohdaten</span>
<span class="t" style="left:625.30px;top:123.50px;font-size:9.33px;line-height:12.13px;color:#e2542e;letter-spacing:-0.816px;">ISP</span>
<span class="t" style="left:660.90px;top:123.50px;font-size:9.33px;line-height:12.13px;color:#e2542e;letter-spacing:-0.247px;">Geo</span>
<span class="t" style="left:708.50px;top:123.50px;font-size:9.33px;line-height:12.13px;color:#e2542e;letter-spacing:-0.114px;">Consent vs IP</span>
<span class="t" style="left:788.20px;top:123.50px;font-size:9.33px;line-height:12.13px;color:#e2542e;letter-spacing:0.204px;">Content</span>
<span class="t" style="left:845.10px;top:123.50px;font-size:9.33px;line-height:12.13px;color:#e2542e;letter-spacing:-0.256px;">DSP Referer</span>
<span class="t" style="left:917.90px;top:123.50px;font-size:9.33px;line-height:12.13px;color:#e2542e;letter-spacing:0.043px;">Periodenvergleich</span>
<span class="t" style="left:1016.10px;top:123.50px;font-size:9.33px;line-height:12.13px;color:#e2542e;letter-spacing:-0.028px;">Export</span>
<span class="t" style="left:14.00px;top:166.40px;font-size:9.33px;line-height:12.13px;color:#e2542e;letter-spacing:0.067px;">Vermarkter</span>
<span class="t" style="left:30.00px;top:187.00px;font-size:9.33px;line-height:12.13px;color:#3a3f44;letter-spacing:0.067px;">alle</span>
<span class="t" style="left:30.00px;top:202.30px;font-size:9.33px;line-height:12.13px;color:#3a3f44;letter-spacing:0.065px;">Goldbach Deutschland</span>
<span class="t" style="left:30.00px;top:217.60px;font-size:9.33px;line-height:12.13px;color:#3a3f44;letter-spacing:0.014px;">Seven.One Media Deutschland</span>
<span class="t" style="left:30.00px;top:232.90px;font-size:9.33px;line-height:12.13px;color:#3a3f44;letter-spacing:0.107px;">Visoon</span>
<span class="t" style="left:9.00px;top:265.00px;font-size:9.33px;line-height:12.13px;color:#e2542e;letter-spacing:-0.085px;">von:</span>
<span class="t" style="left:9.00px;top:289.80px;font-size:9.33px;line-height:12.13px;color:#e2542e;letter-spacing:-0.133px;">bis:</span>
<span class="t" style="left:50.80px;top:262.53px;font-size:8.7px;line-height:11.31px;color:#62686e;letter-spacing:-0.064px;">01.11.2023</span>
<span class="t" style="left:50.80px;top:287.03px;font-size:8.7px;line-height:11.31px;color:#62686e;letter-spacing:-0.064px;">26.11.2023</span>
<span class="t" style="left:14.30px;top:326.33px;font-size:8.2px;line-height:10.66px;color:#fff;letter-spacing:0.366px;text-shadow:0 0 .25px #fff;">3Mt.</span>
<span class="t" style="left:46.10px;top:324.43px;font-size:9.5px;line-height:12.35px;color:#fff;font-weight:bold;letter-spacing:-0.181px;">&infin;</span>
<span class="t" style="left:90.50px;top:326.33px;font-size:8.2px;line-height:10.66px;color:#fff;letter-spacing:0.207px;text-shadow:0 0 .25px #fff;">Filtern</span>
<span class="t" style="left:14.20px;top:352.70px;font-size:9.33px;line-height:12.13px;color:#e2542e;letter-spacing:0.292px;">Monat</span>
<span class="t" style="left:30.30px;top:373.50px;font-size:9.33px;line-height:12.13px;color:#3a3f44;letter-spacing:0.036px;">2023-11</span>
<span class="t" style="left:688.30px;top:155.50px;font-size:9.33px;line-height:12.13px;color:#6f777e;font-weight:bold;letter-spacing:0.011px;">Reaktionsquote Region</span>
</div>
</body></html>
